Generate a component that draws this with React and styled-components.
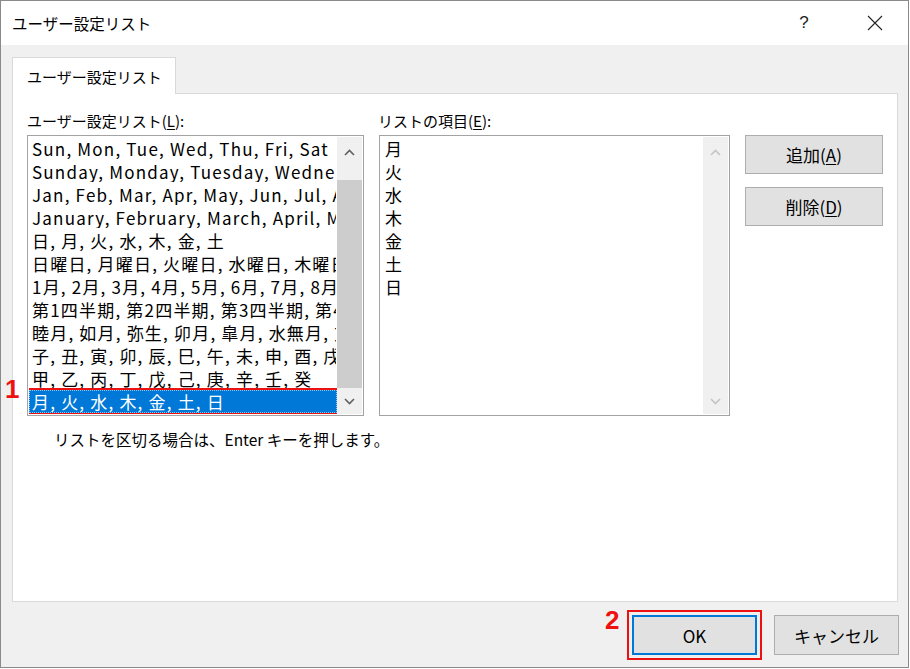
import React from 'react'
import styled, { createGlobalStyle } from 'styled-components'

const GlobalStyle = createGlobalStyle`
  html, body {
    margin: 0;
    padding: 0;
    background: #ffffff;
  }
  body {
    font-family: 'Noto Sans CJK JP', 'Noto Sans', sans-serif;
    color: #000000;
  }
`

const Window = styled.div`
  box-sizing: border-box;
  width: 909px;
  height: 668px;
  border: 1px solid #8a8a8a;
  display: flex;
  flex-direction: column;
  background: #f0f0f0;
`

const TitleBar = styled.div`
  height: 44px;
  background: #ffffff;
  display: flex;
  align-items: center;
  padding-left: 11px;
  padding-right: 10px;
`

const TitleText = styled.div`
  flex: 1;
  font-size: 15.5px;
`

const TitleButton = styled.div`
  width: 46px;
  height: 44px;
  display: flex;
  align-items: center;
  justify-content: center;
  font-size: 17px;
  font-family: 'Liberation Sans', sans-serif;
  color: #222;
  margin-left: ${(props) => props.gap || 0}px;
`

const Body = styled.div`
  flex: 1;
  display: flex;
  flex-direction: column;
  padding: 12px 10px 0 11px;
`

const Tab = styled.div`
  box-sizing: border-box;
  width: 164px;
  height: 37px;
  margin-bottom: -1px;
  position: relative;
  z-index: 1;
  background: #ffffff;
  border: 1px solid #d9d9d9;
  border-bottom: none;
  padding-left: 14px;
  display: flex;
  align-items: center;
  font-size: 15px;
`

const Panel = styled.div`
  box-sizing: border-box;
  height: 509px;
  background: #ffffff;
  border: 1px solid #d9d9d9;
  padding: 15px 0 0 14px;
`

const Grid = styled.div`
  display: grid;
  grid-template-columns: 337px 351px 138px;
  column-gap: 15px;
  grid-template-rows: 26px auto;
`

const Label = styled.div`
  font-size: 15px;
  line-height: 24px;
  margin-left: ${(props) => props.shift || 0}px;
`

const Key = styled.span`
  text-decoration: underline;
  text-underline-offset: 2px;
`

const ListBox = styled.div`
  box-sizing: border-box;
  position: relative;
  height: 281px;
  border: 1px solid #a3a3a3;
  padding: 1px;
  display: flex;
  background: #ffffff;
`

const Rows = styled.div`
  flex: 1;
  overflow: hidden;
`

const Row = styled.div`
  box-sizing: border-box;
  height: 23px;
  line-height: 21px;
  font-size: 17px;
  letter-spacing: 1.2px;
  white-space: nowrap;
  overflow: hidden;
  padding-left: ${(props) => props.indent}px;
  border: 1px solid ${(props) => (props.selected ? '#8fc8f5' : 'transparent')};
  border-style: ${(props) => (props.selected ? 'dotted' : 'solid')};
  background: ${(props) => (props.selected ? '#0078d7' : 'transparent')};
  color: ${(props) => (props.selected ? '#ffffff' : '#000000')};
  outline: ${(props) => (props.marked ? '2px solid #ee1111' : 'none')};
`

const ScrollBar = styled.div`
  width: 25px;
  background: #f0f0f0;
  display: flex;
  flex-direction: column;
`

const ArrowBox = styled.div`
  height: ${(props) => props.h}px;
  display: flex;
  align-items: center;
  justify-content: center;
`

const Track = styled.div`
  flex: 1;
  padding-top: 13px;
  display: flex;
`

const Thumb = styled.div`
  flex: 1;
  background: #cdcdcd;
`

const Marker = styled.div`
  position: absolute;
  font-family: 'Liberation Sans', sans-serif;
  font-weight: bold;
  font-size: 26px;
  line-height: 1;
  color: #ee1111;
`

const SideButtons = styled.div`
  display: flex;
  flex-direction: column;
  gap: 13px;
`

const DialogButton = styled.button`
  box-sizing: border-box;
  position: relative;
  width: ${(props) => props.w}px;
  height: ${(props) => props.h}px;
  background: #e1e1e1;
  border: ${(props) => (props.primary ? '2px solid #0078d7' : '1px solid #adadad')};
  font-family: 'Noto Sans CJK JP', 'Noto Sans', sans-serif;
  font-size: 17px;
  color: #000000;
  padding: 0;
  outline: ${(props) => (props.marked ? '2px solid #ee1111' : 'none')};
  outline-offset: 3px;
`

const Note = styled.div`
  font-size: 15.5px;
  margin: 12px 0 0 27px;
`

const Footer = styled.div`
  display: flex;
  justify-content: flex-end;
  gap: 17px;
  padding: 13px 0 0 0;
  margin-right: -1px;
`

const Chevron = ({ up, color }) => (
  <svg width='11' height='7' viewBox='0 0 11 7'>
    <polyline
      points={up ? '1,6 5.5,1.5 10,6' : '1,1 5.5,5.5 10,1'}
      fill='none'
      stroke={color}
      strokeWidth='1.6'
    />
  </svg>
)

const customLists = [
  'Sun, Mon, Tue, Wed, Thu, Fri, Sat',
  'Sunday, Monday, Tuesday, Wednesday, Thursday, Friday, Saturday',
  'Jan, Feb, Mar, Apr, May, Jun, Jul, Aug, Sep, Oct, Nov, Dec',
  'January, February, March, April, May, June, July, August',
  '日, 月, 火, 水, 木, 金, 土',
  '日曜日, 月曜日, 火曜日, 水曜日, 木曜日, 金曜日, 土曜日',
  '1月, 2月, 3月, 4月, 5月, 6月, 7月, 8月, 9月, 10月',
  '第1四半期, 第2四半期, 第3四半期, 第4四半期',
  '睦月, 如月, 弥生, 卯月, 皐月, 水無月, 文月, 葉月',
  '子, 丑, 寅, 卯, 辰, 巳, 午, 未, 申, 酉, 戌, 亥',
  '甲, 乙, 丙, 丁, 戊, 己, 庚, 辛, 壬, 癸',
  '月, 火, 水, 木, 金, 土, 日',
]

const entries = ['月', '火', '水', '木', '金', '土', '日']

export default function App() {
  const selected = customLists.length - 1

  return (
    <>
      <GlobalStyle />
      <Window>
        <TitleBar>
          <TitleText>ユーザー設定リスト</TitleText>
          <TitleButton>?</TitleButton>
          <TitleButton gap={25}>
            <svg width='16' height='16' viewBox='0 0 16 16'>
              <path d='M1 1 L15 15 M15 1 L1 15' stroke='#222' strokeWidth='1.1' />
            </svg>
          </TitleButton>
        </TitleBar>
        <Body>
          <Tab>ユーザー設定リスト</Tab>
          <Panel>
            <Grid>
              <Label>
                ユーザー設定リスト(<Key>L</Key>):
              </Label>
              <Label shift={-1}>
                リストの項目(<Key>E</Key>):
              </Label>
              <div />
              <ListBox>
                <Marker style={{ left: -23, top: 240 }}>1</Marker>
                <Rows>
                  {customLists.map((text, i) => (
                    <Row
                      key={text}
                      indent={2}
                      selected={i === selected}
                      marked={i === selected}
                    >
                      {text}
                    </Row>
                  ))}
                </Rows>
                <ScrollBar>
                  <ArrowBox h={30}>
                    <Chevron up color='#606060' />
                  </ArrowBox>
                  <Track>
                    <Thumb />
                  </Track>
                  <ArrowBox h={26}>
                    <Chevron color='#606060' />
                  </ArrowBox>
                </ScrollBar>
              </ListBox>
              <ListBox>
                <Rows>
                  {entries.map((text) => (
                    <Row key={text} indent={3}>
                      {text}
                    </Row>
                  ))}
                </Rows>
                <ScrollBar>
                  <ArrowBox h={30}>
                    <Chevron up color='#c4c4c4' />
                  </ArrowBox>
                  <Track />
                  <ArrowBox h={26}>
                    <Chevron color='#c4c4c4' />
                  </ArrowBox>
                </ScrollBar>
              </ListBox>
              <SideButtons>
                <DialogButton w={138} h={39}>
                  追加(<Key>A</Key>)
                </DialogButton>
                <DialogButton w={138} h={39}>
                  削除(<Key>D</Key>)
                </DialogButton>
              </SideButtons>
            </Grid>
            <Note>リストを区切る場合は、Enter キーを押します。</Note>
          </Panel>
          <Footer>
            <DialogButton w={125} h={40} primary marked>
              <Marker style={{ left: -29, top: -10 }}>2</Marker>
              OK
            </DialogButton>
            <DialogButton w={125} h={40}>
              キャンセル
            </DialogButton>
          </Footer>
        </Body>
      </Window>
    </>
  )
}
